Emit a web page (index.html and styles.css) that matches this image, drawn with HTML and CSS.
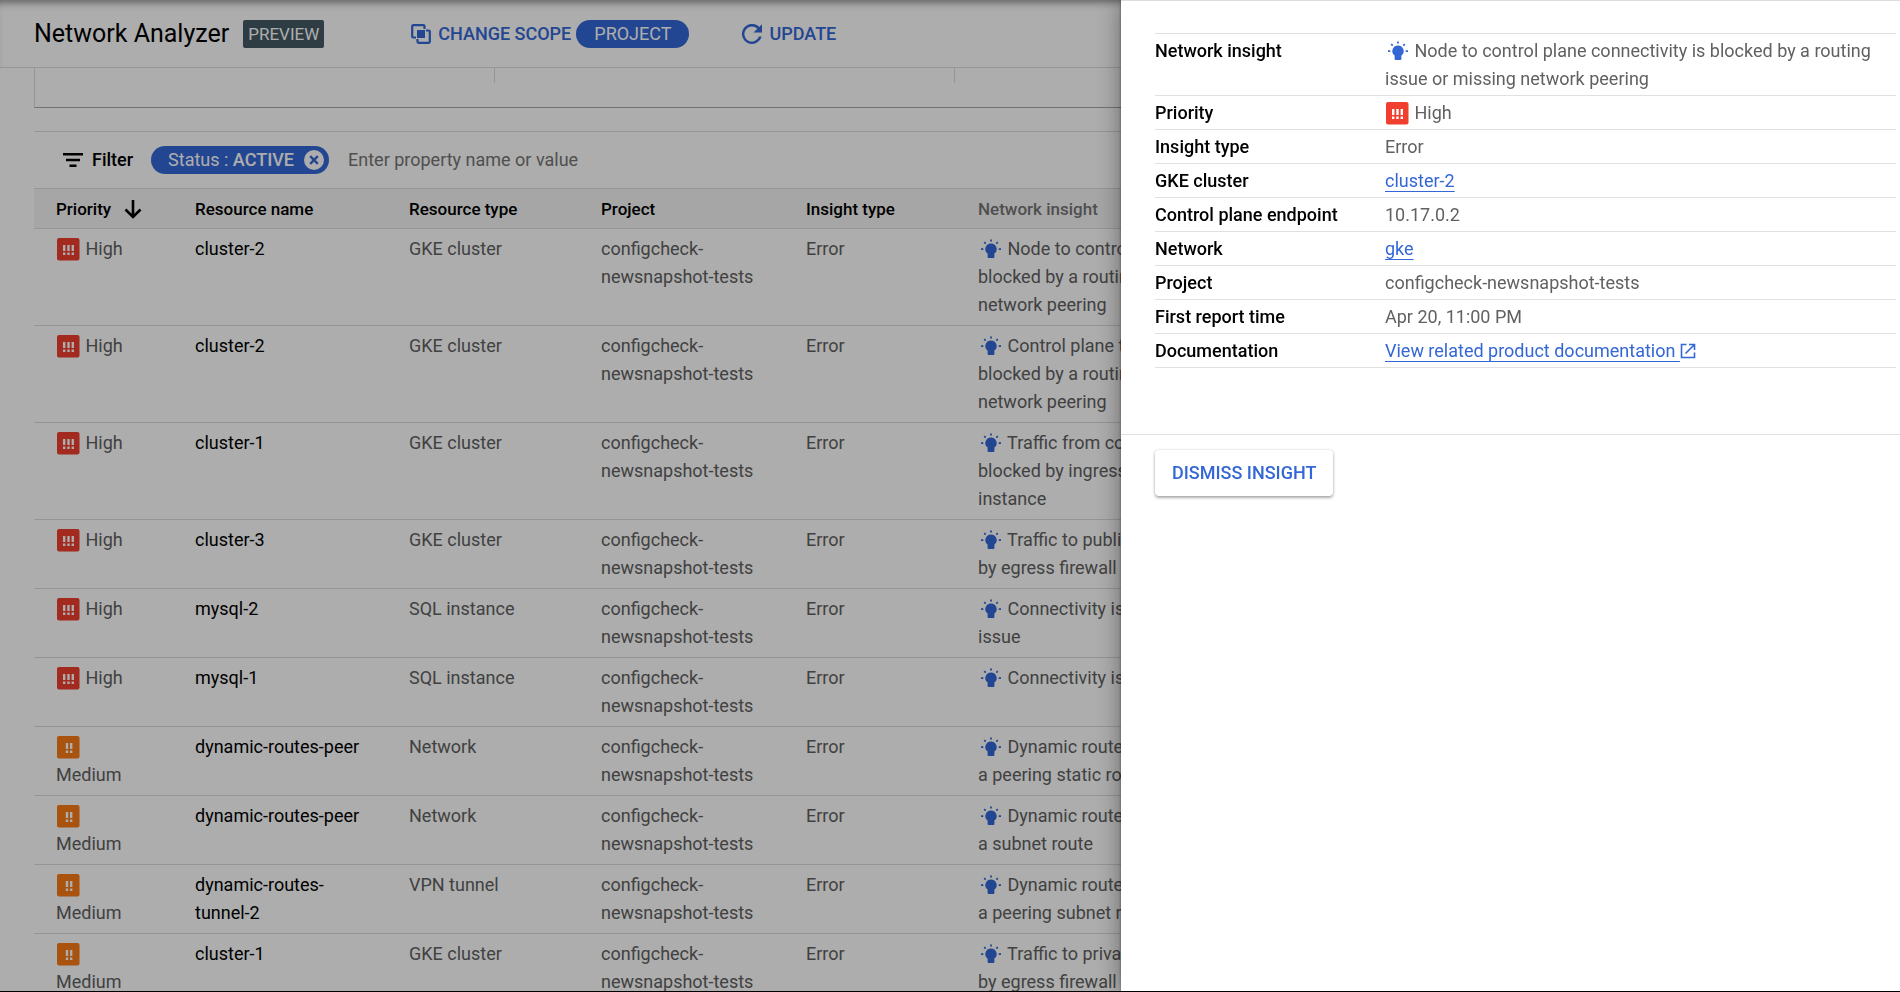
FILE: index.html
```html
<!DOCTYPE html>
<html lang="en">
<head>
<meta charset="utf-8">
<title>Network Analyzer</title>
<link rel="stylesheet" href="styles.css">
</head>
<body>
<svg class="sprite" aria-hidden="true">
  <symbol id="high" viewBox="0 0 24 24">
    <rect x="1" y="1" width="22.500" height="22.500" rx="2" fill="#f03e2f"/>
    <path d="M7 8h2.400v6H7zM11.300 8h2.400v6h-2.400zM15.600 8H18v6h-2.400zM7 15.500h2.400v2.400H7zM11.300 15.500h2.400v2.400h-2.400zM15.600 15.500H18v2.400h-2.400z" fill="#fff"/>
  </symbol>
  <symbol id="medium" viewBox="0 0 24 24">
    <rect x="1" y="1" width="22.500" height="22.500" rx="2" fill="#fa7b17"/>
    <path d="M9.800 8h2.400v6H9.800zM14 8h2.400v6H14zM9.800 15.500h2.400v2.400H9.800zM14 15.500h2.400v2.400H14z" fill="#fff"/>
  </symbol>
  <symbol id="bulb" viewBox="0 0 24 24">
    <path d="M13 6.500a5.600 5.600 0 0 0-3.400 10.100V20a1 1 0 0 0 1 1h4.800a1 1 0 0 0 1-1v-3.400A5.600 5.600 0 0 0 13 6.500zM12.100 2.500h1.800v2h-1.800zM3 11.200h2.300v1.700H3zM20.700 11.200H23v1.700h-2.300zM5.600 5.700l1.200-1.200 1.500 1.500-1.200 1.200zM20.400 5.700l-1.200-1.200-1.500 1.500 1.200 1.200z" fill="#3367d6"/>
  </symbol>
</svg>

<div class="page">
  <header class="topbar">
    <h1 class="title">Network Analyzer</h1>
    <span class="badge">PREVIEW</span>
    <button class="action scope" type="button">
      <svg class="action-icon" viewBox="0 0 20 20" fill="none" stroke="currentColor" stroke-width="2.200"><path d="M5 13.500H2.200a1 1 0 0 1-1-1V2.200a1 1 0 0 1 1-1h10.300a1 1 0 0 1 1 1V5"/><path d="M15 6.500h2.800a1 1 0 0 1 1 1v10.300a1 1 0 0 1-1 1H7.500a1 1 0 0 1-1-1V15"/><path d="M6 6h8v8H6z" fill="currentColor" stroke="none"/></svg>
      CHANGE SCOPE
    </button>
    <span class="pill">PROJECT</span>
    <button class="action update" type="button">
      <svg class="action-icon" viewBox="0 0 20 20"><path d="M17.200 3A10 10 0 1 0 19.600 12.500H17A7.500 7.500 0 1 1 15.300 4.800L11.500 8.600H20V.2z" fill="currentColor"/></svg>
      UPDATE
    </button>
  </header>

  <main class="content">
    <section class="summary"><div></div><div></div><div></div><div></div></section>

    <section class="results">
      <div class="filterbar">
        <svg class="filter-icon" viewBox="0 0 20 14"><path d="M0 0h20v2.500H0zM3 5.700h14v2.500H3zM6.500 11.400h7v2.500h-7z"/></svg>
        <label class="filter-label" for="filter">Filter</label>
        <span class="chip">Status : <b>ACTIVE</b>
          <button class="chip-close" type="button" aria-label="Remove filter"><svg viewBox="0 0 20 20"><circle cx="10" cy="10" r="10" fill="#fff"/><path d="M6.200 6.200l7.600 7.600M13.800 6.200l-7.600 7.600" stroke="#3367d6" stroke-width="2.400"/></svg></button>
        </span>
        <input class="filter-input" id="filter" type="text" placeholder="Enter property name or value">
      </div>

      <table class="insights">
        <colgroup><col class="c-priority"><col class="c-name"><col class="c-type"><col class="c-project"><col class="c-kind"><col class="c-insight"><col></colgroup>
        <thead>
          <tr><th>Priority <svg class="sort" viewBox="0 0 18 20"><path d="M9 1v17M1.500 10.500L9 18l7.500-7.500" fill="none" stroke="#000" stroke-width="2.600"/></svg></th><th>Resource name</th><th>Resource type</th><th>Project</th><th>Insight type</th><th class="muted">Network insight</th><th></th></tr>
        </thead>
        <tbody>
          <tr><td><svg class="icon"><use href="#high"/></svg> High</td><td class="name">cluster-2</td><td>GKE cluster</td><td>configcheck-newsnapshot-tests</td><td>Error</td><td><svg class="icon"><use href="#bulb"/></svg> Node to control plane connectivity is blocked by a routing issue or missing network peering</td><td></td></tr>
          <tr><td><svg class="icon"><use href="#high"/></svg> High</td><td class="name">cluster-2</td><td>GKE cluster</td><td>configcheck-newsnapshot-tests</td><td>Error</td><td><svg class="icon"><use href="#bulb"/></svg> Control plane to node connectivity is blocked by a routing issue or missing network peering</td><td></td></tr>
          <tr><td><svg class="icon"><use href="#high"/></svg> High</td><td class="name">cluster-1</td><td>GKE cluster</td><td>configcheck-newsnapshot-tests</td><td>Error</td><td><svg class="icon"><use href="#bulb"/></svg> Traffic from control plane to node is<br>blocked by ingress firewall on the<br>instance</td><td></td></tr>
          <tr><td><svg class="icon"><use href="#high"/></svg> High</td><td class="name">cluster-3</td><td>GKE cluster</td><td>configcheck-newsnapshot-tests</td><td>Error</td><td><svg class="icon"><use href="#bulb"/></svg> Traffic to public endpoint is blocked<br>by egress firewall</td><td></td></tr>
          <tr><td><svg class="icon"><use href="#high"/></svg> High</td><td class="name">mysql-2</td><td>SQL instance</td><td>configcheck-newsnapshot-tests</td><td>Error</td><td><svg class="icon"><use href="#bulb"/></svg> Connectivity is blocked by a routing<br>issue</td><td></td></tr>
          <tr><td><svg class="icon"><use href="#high"/></svg> High</td><td class="name">mysql-1</td><td>SQL instance</td><td>configcheck-newsnapshot-tests</td><td>Error</td><td><svg class="icon"><use href="#bulb"/></svg> Connectivity is blocked by firewall</td><td></td></tr>
          <tr><td><svg class="icon"><use href="#medium"/></svg> Medium</td><td class="name">dynamic-routes-peer</td><td>Network</td><td>configcheck-newsnapshot-tests</td><td>Error</td><td><svg class="icon"><use href="#bulb"/></svg> Dynamic route is shadowed by<br>a peering static route</td><td></td></tr>
          <tr><td><svg class="icon"><use href="#medium"/></svg> Medium</td><td class="name">dynamic-routes-peer</td><td>Network</td><td>configcheck-newsnapshot-tests</td><td>Error</td><td><svg class="icon"><use href="#bulb"/></svg> Dynamic route is shadowed by<br>a subnet route</td><td></td></tr>
          <tr><td><svg class="icon"><use href="#medium"/></svg> Medium</td><td class="name">dynamic-routes-tunnel-2</td><td>VPN tunnel</td><td>configcheck-newsnapshot-tests</td><td>Error</td><td><svg class="icon"><use href="#bulb"/></svg> Dynamic route is shadowed by<br>a peering subnet route</td><td></td></tr>
          <tr><td><svg class="icon"><use href="#medium"/></svg> Medium</td><td class="name">cluster-1</td><td>GKE cluster</td><td>configcheck-newsnapshot-tests</td><td>Error</td><td><svg class="icon"><use href="#bulb"/></svg> Traffic to private endpoint is blocked<br>by egress firewall</td><td></td></tr>
        </tbody>
      </table>
    </section>
  </main>
</div>

<div class="scrim"></div>

<aside class="panel">
  <div class="panel-body">
    <table class="details">
      <colgroup><col class="c-label"><col></colgroup>
      <tbody>
        <tr><th scope="row">Network insight</th><td><svg class="icon"><use href="#bulb"/></svg> Node to control plane connectivity is blocked by a routing issue or missing network peering</td></tr>
        <tr><th scope="row">Priority</th><td><svg class="icon"><use href="#high"/></svg> High</td></tr>
        <tr><th scope="row">Insight type</th><td>Error</td></tr>
        <tr><th scope="row">GKE cluster</th><td><a href="#cluster-2">cluster-2</a></td></tr>
        <tr><th scope="row">Control plane endpoint</th><td>10.17.0.2</td></tr>
        <tr><th scope="row">Network</th><td><a href="#gke">gke</a></td></tr>
        <tr><th scope="row">Project</th><td>configcheck-newsnapshot-tests</td></tr>
        <tr><th scope="row">First report time</th><td>Apr 20, 11:00 PM</td></tr>
        <tr><th scope="row">Documentation</th><td><a href="#docs">View related product documentation <svg class="external" viewBox="0 0 16 16" fill="none" stroke="currentColor" stroke-width="1.600"><path d="M6.500 1.500h-5v13h13v-5M9 1.500h5.500V7M14.500 1.500L5.500 10.500"/></svg></a></td></tr>
      </tbody>
    </table>
  </div>
  <div class="panel-actions"><button class="dismiss" type="button">DISMISS INSIGHT</button></div>
</aside>
</body>
</html>
```
FILE: styles.css
```css
* { box-sizing: border-box; }
html, body { height: 100%; }
body {
  margin: 0;
  overflow: hidden;
  background: #fff;
  color: #616161;
  font: 400 18px/28px Roboto, sans-serif;
}
button, input { font: inherit; color: inherit; border: 0; background: none; padding: 0; }
button { cursor: pointer; }
.sprite { position: absolute; width: 0; height: 0; }

.page { height: 100%; overflow: hidden; }
.topbar {
  display: flex;
  align-items: center;
  height: 68px;
  padding: 0 34px;
  border-bottom: 1px solid #dadce0;
  box-shadow: inset 0 8px 8px -6px rgba(0, 0, 0, .5);
}
.title { margin: 0 14px 0 0; font-size: 25px; font-weight: 400; color: #000; }
.badge { padding: 0 5px; border-radius: 2px; background: #455a64; color: #fff; font-size: 17px; }
.action { display: flex; align-items: center; gap: 7px; color: #3367d6; font-weight: 500; }
.action-icon { width: 20px; height: 20px; }
.scope { margin-left: 87px; }
.pill { margin-left: 5px; padding: 0 18px; border-radius: 14px; background: #3367d6; color: #fff; }
.update { margin-left: 53px; }

.content { padding: 0 26px 0 34px; }
.summary {
  display: flex;
  height: 40px;
  padding-bottom: 24px;
  border: 1px solid #dadce0;
  border-top: 0;
  border-bottom-color: #a6a8ab;
}
.summary div { flex: 1; border-right: 1px solid #dadce0; }
.summary div:last-child { border: 0; }
.results { margin-top: 23px; border-top: 1px solid #dadce0; }

.filterbar { display: flex; align-items: center; height: 56px; padding-left: 29px; }
.filter-icon { width: 20px; height: 14px; margin-right: 9px; }
.filter-label { margin-right: 18px; font-weight: 500; color: #000; }
.chip { display: flex; align-items: center; padding: 0 5px 0 17px; border-radius: 14px; background: #3367d6; color: #fff; white-space: pre; }
.chip b { font-weight: 500; }
.chip-close { width: 20px; height: 20px; margin-left: 10px; }
.chip-close svg { display: block; }
.filter-input { flex: 1; margin-left: 19px; }
.filter-input::placeholder { color: #757575; opacity: 1; }

table { border-collapse: separate; border-spacing: 0; table-layout: fixed; width: 100%; }
th, td { text-align: left; vertical-align: top; font-weight: 400; }
.insights th {
  padding: 6px 24px 5px 22px;
  border-top: 1px solid #dadce0;
  border-bottom: 1px solid #dadce0;
  background: #f5f5f5;
  color: #000;
  font-size: 17px;
  font-weight: 500;
  white-space: nowrap;
}
.insights th.muted { color: #757575; }
.insights td { padding: 6px 24px 6px 22px; border-bottom: 1px solid #dadce0; }
.insights td.name { color: #000; }
.c-priority { width: 139px; }
.c-name { width: 214px; }
.c-type { width: 192px; }
.c-project { width: 205px; }
.c-kind { width: 172px; }
.c-insight { width: 396px; }
.sort { width: 18px; height: 20px; margin-left: 9px; vertical-align: -4px; }
.icon { width: 24px; height: 24px; margin-right: 1px; vertical-align: -6px; }

.scrim { position: fixed; inset: 0; background: rgba(0, 0, 0, .32); border-bottom: 1px solid #000; }

.panel {
  position: fixed;
  top: 0;
  right: 0;
  bottom: 1px;
  width: 41%;
  border-top: 1px solid #dadce0;
  background: #fff;
  box-shadow: 0 0 24px rgba(0, 0, 0, .4), 0 0 3px rgba(0, 0, 0, .4);
}
.panel-body { padding: 32px 4px 66px 34px; }
.details { border-top: 1px solid #e0e0e0; }
.details th, .details td { padding: 3px 0 2px; border-bottom: 1px solid #e0e0e0; }
.details th { color: #000; font-weight: 500; }
.c-label { width: 230px; }
.details a { color: #3367d6; text-decoration: underline; text-decoration-thickness: 1px; text-underline-offset: 4px; text-decoration-skip-ink: none; }
.external { width: 16px; height: 16px; vertical-align: -2px; }
.panel-actions { padding: 15px 34px; border-top: 1px solid #e0e0e0; }
.dismiss {
  padding: 9px 17px;
  border-radius: 4px;
  background: #fff;
  color: #3367d6;
  font-weight: 500;
  box-shadow: 0 2px 3px rgba(0, 0, 0, .3), 0 0 3px rgba(0, 0, 0, .15);
}
```
